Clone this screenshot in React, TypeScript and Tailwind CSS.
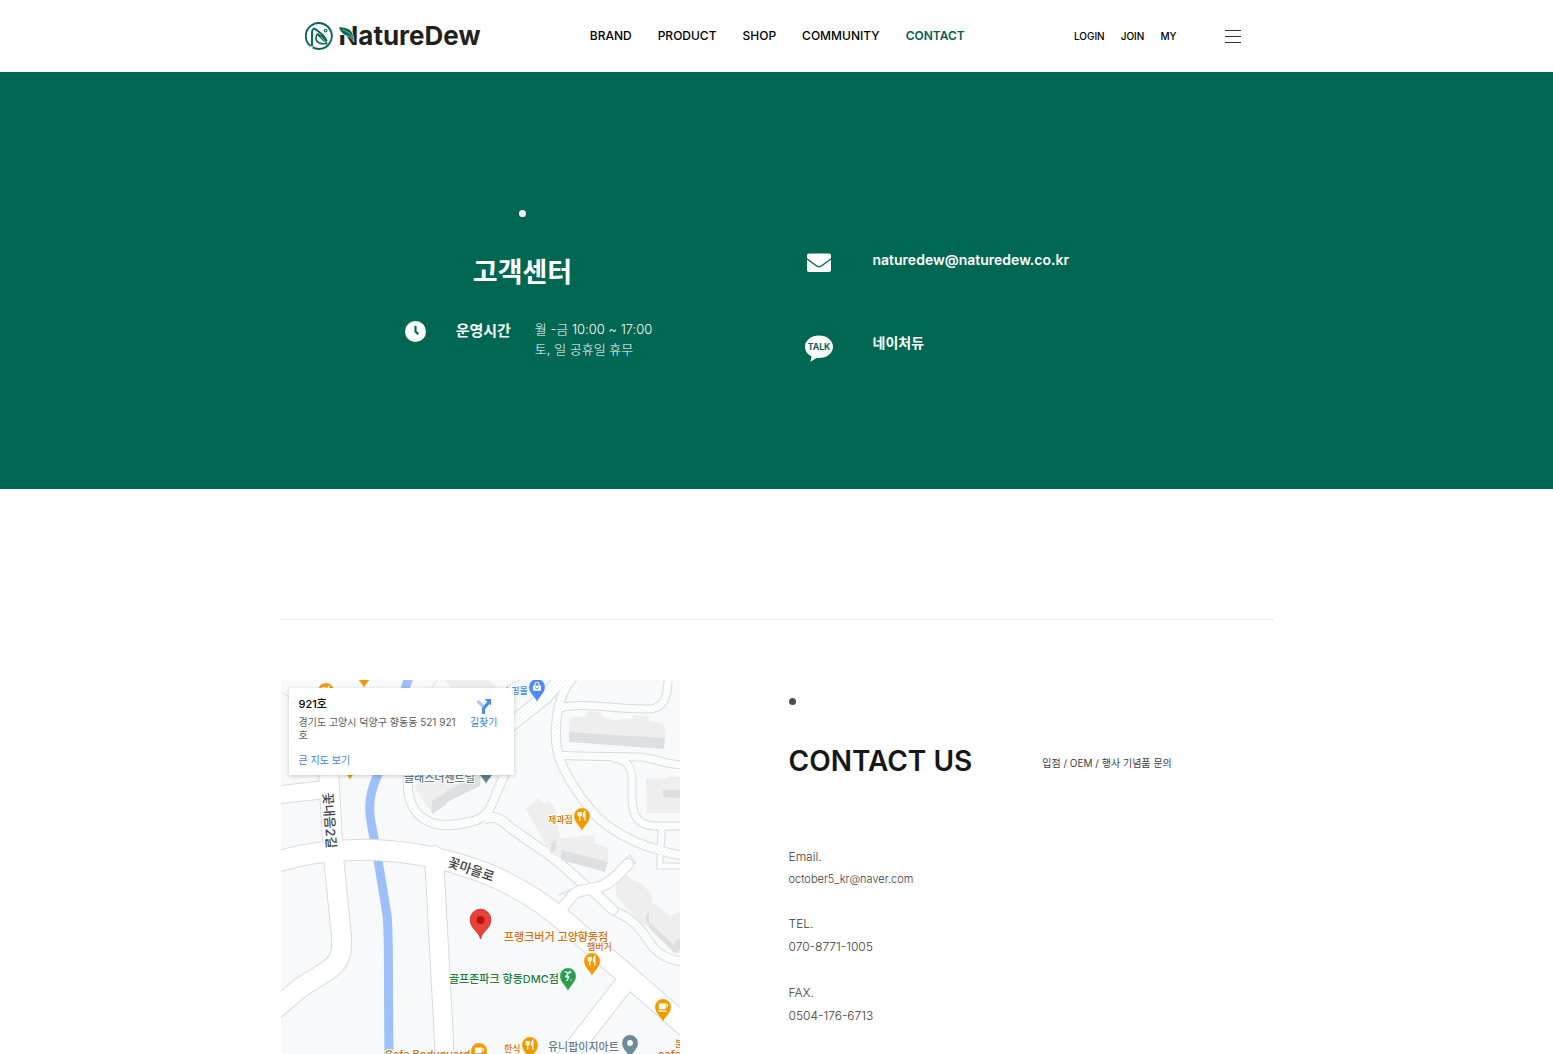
import React from "react";

const navItems = ["BRAND", "PRODUCT", "SHOP", "COMMUNITY", "CONTACT"];
const userItems = ["LOGIN", "JOIN", "MY"];

const contacts = [
  { label: "Email.", value: "october5_kr@naver.com", href: "mailto:october5_kr@naver.com", small: true },
  { label: "TEL.", value: "070-8771-1005", href: "tel:070-8771-1005", small: false },
  { label: "FAX.", value: "0504-176-6713", href: "tel:0504-176-6713", small: false },
];

function Logo() {
  return (
    <a href="#" aria-label="NatureDew" className="flex items-center gap-1.5">
      <svg viewBox="0 0 28 28" className="size-7" fill="none" stroke="#006853">
        <path d="M5.500 24A13 13 0 1 1 14 27c-2.400 0-4.600-.6-6.300-1.600" strokeWidth="1.900" />
        <path d="M7 24.500V10.500C7 6.800 9 5.800 11 7.600c3.800 3.200 9.300 6 10.600 11.400" strokeWidth="1.900" />
        <path d="M21.500 21.500c-5.500.8-10-.8-10.500-4.600-.2-2.200.4-3.800 1.400-5 5 1.800 8.800 4.600 9.100 9.600z" strokeWidth="1.600" />
        <path d="M13 13l6.500 6.500" strokeWidth="1.200" />
        <circle cx="20.600" cy="8.600" r="1.400" strokeWidth="1.100" />
      </svg>
      <span className="relative text-[26px] leading-8 font-bold text-[#231f1c]">
        NatureDew
        <svg viewBox="0 0 18 18" className="absolute top-1.5 left-0 size-[18px]">
          <path d="M0 0h10v5L7 9H0z" fill="#fff" />
          <path d="M-.5 1c5.500 0 10.500 1 13 4.500 2 2.800 2.200 6 2.500 10.500-2.200-3.500-4-5-7-6C4.500 9 1.500 6.500-.5 1z" fill="#006853" stroke="#fff" strokeWidth=".6" />
          <path d="M3.500 3.800c4.200 1.300 7.700 3.400 10.300 8" stroke="#fff" strokeWidth=".5" fill="none" />
        </svg>
      </span>
    </a>
  );
}

function Header() {
  return (
    <header className="bg-white">
      <div className="mx-auto flex h-[72px] max-w-[992px] items-center justify-between pr-8 pl-6">
        <Logo />
        <nav className="flex gap-[26px] text-[12px] font-medium text-black">
          {navItems.map((item) => (
            <a key={item} href="#" className={item === "CONTACT" ? "font-semibold text-[#006049]" : ""}>
              {item}
            </a>
          ))}
        </nav>
        <div className="flex items-center gap-12">
          <div className="flex gap-4 text-[10px] font-medium text-black">
            {userItems.map((item) => (
              <a key={item} href="#">
                {item}
              </a>
            ))}
          </div>
          <button type="button" aria-label="메뉴" className="flex w-4 flex-col gap-[5px]">
            <span className="h-px w-full bg-[#333]" />
            <span className="h-px w-full bg-[#333]" />
            <span className="h-px w-full bg-[#333]" />
          </button>
        </div>
      </div>
    </header>
  );
}

function Hero() {
  return (
    <section className="bg-[#006753] text-white">
      <div className="mx-auto grid max-w-[992px] grid-cols-2 pb-[126px]">
        <div className="flex flex-col items-center pt-[138px]">
          <div className="flex flex-col items-center pr-3">
            <span className="size-[7px] rounded-full bg-white" />
            <h1 className="mt-9 text-[27px] leading-10 font-bold">고객센터</h1>
          </div>
          <div className="mt-[26px] flex items-start">
            <svg viewBox="0 0 20 20" className="mt-0.5 size-[21px]">
              <circle cx="10" cy="10" r="10" fill="#fff" />
              <path d="M10 4.500V10l2.700 2.500" fill="none" stroke="#006753" strokeWidth="2" />
            </svg>
            <h2 className="mt-0.5 ml-[30px] text-[15px] leading-5 font-bold">운영시간</h2>
            <p className="ml-6 text-[13px] leading-5 font-light">
              월 -금 10:00 ~ 17:00
              <br />
              토, 일 공휴일 휴무
            </p>
          </div>
        </div>
        <div className="flex flex-col gap-[60px] pt-[178px] pl-7 text-[14px] leading-5 font-semibold">
          <a href="mailto:naturedew@naturedew.co.kr" className="flex items-start gap-10">
            <svg viewBox="0 0 28 20" className="mt-[3px] h-5 w-7">
              <rect x="2" y="0.500" width="24" height="18.500" rx="2" fill="#fff" />
              <path d="M1.500 5.500l9.800 7.300c1.800 1.300 3.600 1.300 5.400 0l9.800-7.300" fill="none" stroke="#006753" strokeWidth="1.400" />
            </svg>
            naturedew@naturedew.co.kr
          </a>
          <a href="#" className="flex items-start gap-10">
            <svg viewBox="0 0 29 28" className="mt-0.5 h-7 w-7">
              <path d="M14.500 0C6.500 0 0 5 0 11.700c0 4.300 2.700 8 6.800 10l-1.200 5.500 6.200-4c.9.100 1.800.2 2.700.2 8 0 14.500-5 14.500-11.700S22.500 0 14.500 0z" fill="#fff" />
              <text x="14.500" y="15" textAnchor="middle" fontSize="9" fontWeight="700" fill="#006753">
                TALK
              </text>
            </svg>
            네이처듀
          </a>
        </div>
      </div>
    </section>
  );
}

type PinKind = "fork" | "cup" | "bag" | "golf" | "dot" | "none";

function Pin({ x, y, color, kind }: { x: number; y: number; color: string; kind: PinKind }) {
  return (
    <g transform={`translate(${x} ${y})`}>
      <path d="M0 15.500C-1.500 10-8.200 6.500-8.200 0a8.200 8.200 0 0 1 16.400 0C8.200 6.500 1.500 10 0 15.500z" fill={color} stroke="#fff" strokeWidth=".5" />
      {kind === "fork" && (
        <path d="M-3.800-4v2.500c0 1 .6 1.500 1.500 1.500V4.500M-.8-4v2.500C-.8-.5-1.400 0-2.300 0v-4M2.800 4.500v-9C1.500-3.500 1.300-1.500 1.500.5h1.300" fill="none" stroke="#fff" strokeWidth="1.300" />
      )}
      {kind === "cup" && (
        <g>
          <path d="M-4.200-3.500h7v4.200c0 1-.8 1.600-1.700 1.600h-3.600c-1 0-1.700-.7-1.700-1.600zM-4.500 3.500h8v1.200h-8z" fill="#fff" />
          <path d="M2.500-2.700h2v2.500h-2" fill="none" stroke="#fff" />
        </g>
      )}
      {kind === "bag" && (
        <g>
          <path d="M-4-1.500h8v5.200h-8z" fill="#fff" />
          <path d="M-2-1.500v-1.200a2 2 0 0 1 4 0v1.200" fill="none" stroke="#fff" strokeWidth="1.100" />
          <path d="M-1.500.3a1.500 1.500 0 0 0 3 0" fill="none" stroke={color} strokeWidth=".9" />
        </g>
      )}
      {kind === "golf" && (
        <g fill="none" stroke="#fff" strokeWidth="1.300">
          <path d="M-3.500-4.500l4 1.500 3-1M.5-3l-2.700 3.500L.5 2l-2 3M-2.200.5l3.500 0" />
          <circle cx="3" cy="4" r=".7" fill="#fff" stroke="none" />
          <circle cx="1.800" cy="-4.800" r=".8" fill="#fff" stroke="none" />
        </g>
      )}
      {kind === "dot" && <circle r="2.900" fill="#fff" />}
    </g>
  );
}

const lanes = [
  { d: "M500 733L520 717L545 697L562 678", w: 13 },
  { d: "M574 676C560 692 555 715 556 740C557 765 578 795 597 817C620 838 650 850 684 856", w: 8 },
  { d: "M560 708C580 702 610 709 645 709C664 710 668 698 668 678", w: 7 },
  { d: "M556 755C585 757 610 756 640 757C655 758 665 765 684 765", w: 7 },
  { d: "M612 758C628 759 633 768 632 785C631 812 634 825 655 826L684 826", w: 7 },
  { d: "M662 828L660 854", w: 6 },
  { d: "M408 770C407 790 408 805 420 816C434 828 452 826 470 822C492 818 492 800 500 785L506 770", w: 8 },
  { d: "M484 819C497 814 503 822 512 829L555 859L588 888", w: 9 },
  { d: "M614 911C632 918 640 928 648 940C656 953 666 959 684 962", w: 8 },
  { d: "M660 855V866H684", w: 5 },
];

const roads = [
  { d: "M276 795L330 789", w: 17 },
  { d: "M328 760L333 852L341 932C343 952 341 962 327 971L300 988L272 1012", w: 19 },
  { d: "M434 855L445 1060", w: 18 },
  { d: "M624 984L563 1062", w: 18 },
  { d: "M556 916L573 895C580 888 592 891 604 885C615 880 620 872 628 864", w: 10 },
  { d: "M592 890L613 910", w: 9 },
  { d: "M270 864C300 854 335 849 375 850C420 852 460 863 490 875C525 890 550 908 575 930L690 1030", w: 20 },
];

function MapLabel({ x, y, size, color, transform, children }: { x?: number; y?: number; size: number; color: string; transform?: string; children: string }) {
  return (
    <text x={x} y={y} fontSize={size} fill={color} transform={transform} stroke="#fff" strokeWidth="2" paintOrder="stroke" strokeLinejoin="round" fontWeight="500">
      {children}
    </text>
  );
}

function MapDrawing() {
  const orange = "#f29900";
  return (
    <svg viewBox="281 680 399 374" preserveAspectRatio="xMidYMin slice" className="absolute inset-0 size-full" role="img" aria-label="지도">
      <defs>
        <pattern id="dots" width="4" height="4" patternUnits="userSpaceOnUse">
          <rect width="4" height="4" fill="#fff" />
          <circle cx="1" cy="1" r=".55" fill="#e2e4e6" />
          <circle cx="3" cy="3" r=".55" fill="#e2e4e6" />
        </pattern>
      </defs>
      <rect x="281" y="680" width="399" height="374" fill="#f8f9fb" />
      <path d="M281 692L289 697M430 690L437 680M508 686L520 680" stroke="#dadce2" fill="none" />
      <path d="M445 680H488L500 690H452z" fill="#ededee" />

      {lanes.map((l) => (
        <path key={l.d} d={l.d} fill="none" stroke="#d8dae1" strokeWidth={l.w + 2} />
      ))}
      {lanes.map((l) => (
        <path key={l.d} d={l.d} fill="none" stroke="url(#dots)" strokeWidth={l.w} />
      ))}

      <g fill="#eeeeee">
        <path d="M569 718L576 717L586 716L588 711L601 713L603 717L613 720L632 719L634 715L648 717L649 721L660 723L665 726V738L569 732z" />
        <path d="M646 778L665 779L668 777H680V813L647 813z" />
        <path d="M526 809L538 798L543 803L549 801L555 808L560 838L580 837L583 835L595 836V843L608 848V860L600 870L560 858L550 853z" />
        <path d="M414 786L440 770H490L480 783L447 802L432 813z" />
        <path d="M616 882L627 875L632 880L641 883L652 895V902L670 916L680 912V953L675 953L649 927L640 922L616 896z" />
      </g>
      <g fill="#dedfe1">
        <path d="M569 732L665 738L664 749L569 742z" />
        <path d="M663 790H680V798L663 797z" />
        <path d="M561 850L608 862L605 872L561 860zM551 843L556 839V850L551 853z" />
        <path d="M432 801L447 792V804L432 814zM447 790L480 776V786L447 802z" />
        <path d="M646 914L649 912V924L646 923zM675 941L680 938V949L675 954zM649 922L675 946V953L649 928z" />
      </g>
      <path d="M622 862L630 855L636 863L628 866M558 895L571 890L573 902" fill="none" stroke="#d4d6dc" />

      <path d="M410 674L403 695M380 770C370 790 368 805 371 822L378 860L387 915C389 930 388 950 389 1060" fill="none" stroke="#9dc0f9" strokeWidth="9" />

      {roads.map((r) => (
        <path key={r.d} d={r.d} fill="none" stroke="#d8dae0" strokeWidth={r.w + 2} strokeLinecap="round" />
      ))}
      {roads.map((r) => (
        <path key={r.d} d={r.d} fill="none" stroke="#fff" strokeWidth={r.w} strokeLinecap="round" />
      ))}

      <Pin x={326} y={691} color={orange} kind="fork" />
      <Pin x={364} y={673} color={orange} kind="none" />
      <Pin x={350} y={765} color={orange} kind="none" />
      <Pin x={486} y={769} color="#607d8b" kind="none" />
      <Pin x={537} y={687} color="#4c8bf5" kind="bag" />
      <Pin x={582} y={816} color={orange} kind="fork" />
      <Pin x={592} y={961} color={orange} kind="fork" />
      <Pin x={568} y={976} color="#2a9d4e" kind="golf" />
      <Pin x={663} y={1007} color={orange} kind="cup" />
      <Pin x={530} y={1045} color={orange} kind="fork" />
      <Pin x={479} y={1051} color={orange} kind="cup" />
      <Pin x={630} y={1043} color="#6f8997" kind="dot" />

      <MapLabel x={503} y={694} size={9} color="#4285f4">쇼핑몰</MapLabel>
      <MapLabel x={404} y={782} size={11} color="#607d8b">클래스너센트럴</MapLabel>
      <MapLabel x={548} y={823} size={9} color="#d56e0c">제과점</MapLabel>
      <MapLabel x={504} y={941} size={11} color="#d56e0c">프랭크버거 고양향동점</MapLabel>
      <MapLabel x={587} y={950} size={9} color="#d56e0c">햄버거</MapLabel>
      <MapLabel x={449} y={983} size={11} color="#188038">골프존파크 향동DMC점</MapLabel>
      <MapLabel x={504} y={1052} size={9} color="#d56e0c">한식</MapLabel>
      <MapLabel x={548} y={1051} size={11} color="#607d8b">유니팝이지아트</MapLabel>
      <MapLabel x={385} y={1058} size={11} color="#d56e0c">Cafe Bodyguard</MapLabel>
      <MapLabel x={675} y={1047} size={9} color="#d56e0c">분</MapLabel>
      <MapLabel x={658} y={1058} size={11} color="#d56e0c">cafe</MapLabel>
      <MapLabel size={13} color="#3c4043" transform="translate(447 866) rotate(19)">꽃마을로</MapLabel>
      <MapLabel size={13} color="#3c4043" transform="translate(323 793) rotate(86)">꽃내음2길</MapLabel>

      <path d="M480.500 939C479 931 470.200 929 470.200 919.500a10.300 10.300 0 0 1 20.600 0C490.800 929 482 931 480.500 939z" fill="#ea4335" stroke="#c5221f" strokeWidth=".8" />
      <circle cx="480.500" cy="920" r="4" fill="#b31412" />
    </svg>
  );
}

function MapPanel() {
  return (
    <div className="relative min-h-[374px] overflow-hidden">
      <MapDrawing />
      <div className="absolute top-2 left-2 flex h-[87px] w-[225px] justify-between bg-white pt-2 pr-4 pl-2.5 shadow-[0_1px_4px_rgba(0,0,0,0.2)]">
        <div className="w-[164px]">
          <p className="text-[11px] leading-4 font-medium text-black">921호</p>
          <p className="mt-1 text-[10px] leading-[13px] text-[#5b5b5b]">경기도 고양시 덕양구 향동동 521 921호</p>
          <a href="#" className="mt-2.5 block text-[10px] leading-4 text-[#3a84df]">
            큰 지도 보기
          </a>
        </div>
        <a href="#" className="flex h-9 shrink-0 flex-col items-center text-[10px] leading-4 text-[#3a84df]">
          <svg viewBox="0 0 16 16" className="mt-0.5 size-4" fill="none">
            <path d="M1.500 3L7 8.500" stroke="#a9c5fb" strokeWidth="3" />
            <path d="M7.500 16V10.500L13 4" stroke="#4c8bf5" strokeWidth="3.200" strokeLinejoin="round" />
            <path d="M8.500 1H15v6.500z" fill="#4c8bf5" />
          </svg>
          길찾기
        </a>
      </div>
    </div>
  );
}

function ContactInfo() {
  return (
    <div className="pt-[18px] pl-[109px] text-[#3c3c3c]">
      <div className="size-[7px] rounded-full bg-[#4d4d4d]" />
      <div className="mt-9 flex items-center gap-[70px]">
        <h2 className="text-[28px] leading-10 font-semibold whitespace-nowrap text-[#171717]">CONTACT US</h2>
        <p className="mt-1 text-[10px] leading-4">입점 / OEM / 행사 기념품 문의</p>
      </div>
      <dl className="mt-[65px] flex flex-col gap-[23px] font-light">
        {contacts.map((c) => (
          <div key={c.label}>
            <dt className="text-[12px] leading-[22px]">{c.label}</dt>
            <dd className={c.small ? "text-[11px] leading-[22px]" : "text-[12px] leading-6"}>
              <a href={c.href}>{c.value}</a>
            </dd>
          </div>
        ))}
      </dl>
    </div>
  );
}

export default function App() {
  return (
    <div className="flex min-h-screen flex-col bg-white font-['Inter','Noto_Sans_CJK_KR',sans-serif]">
      <Header />
      <Hero />
      <main className="mx-auto flex w-full max-w-[992px] grow flex-col pt-[130px]">
        <hr className="border-t border-dotted border-[#dcdcdc]" />
        <section className="mt-[60px] grid grow grid-cols-[399fr_593fr]">
          <MapPanel />
          <ContactInfo />
        </section>
      </main>
    </div>
  );
}
